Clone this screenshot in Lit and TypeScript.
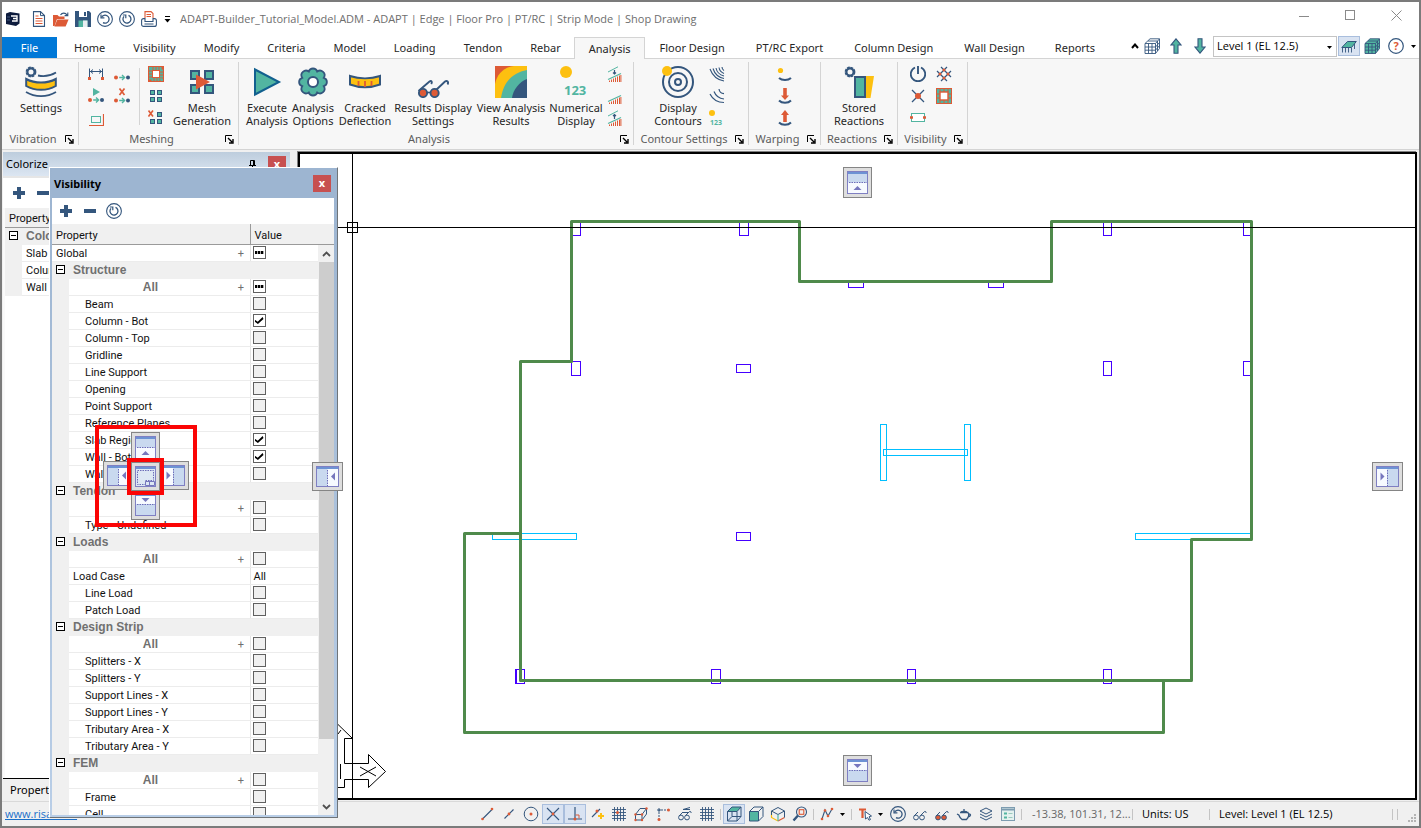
import { LitElement, html, svg, css, nothing, TemplateResult, SVGTemplateResult } from "lit";
import { customElement, property } from "lit/decorators.js";

const N = "#34567d";
const T = "#52b5a1";
const O = "#dd5a36";
const Y = "#fdc010";

const icon = (w: number, h: number, body: SVGTemplateResult) =>
  html`<svg class="ico" width=${w} height=${h} viewBox="0 0 ${w} ${h}" fill="none" aria-hidden="true">${body}</svg>`;

/* ---------- shared pieces ---------- */
const caret = icon(5, 3, svg`<path d="M0 0H5L2.5 3Z" fill="#000"/>`);
const launcher = icon(9, 9, svg`<path d="M.5 7V.5H7" stroke="#000"/><path d="M3 3L7 7M8 4V8H4" stroke="#000" stroke-width="1.4"/>`);
const plus = icon(12, 12, svg`<path d="M6 0V12M0 6H12" stroke=${N} stroke-width="4"/>`);
const minus = icon(12, 12, svg`<path d="M0 6H12" stroke=${N} stroke-width="4"/>`);
const refresh = icon(16, 16, svg`<circle cx="8" cy="8" r="7.4" stroke=${N} stroke-width="1.1"/><path d="M9.5 4.4A4 4 0 1 1 5 5.4" stroke=${N} stroke-width="1.3"/><path d="M3.8 4H6.8V7.2" stroke=${N} stroke-width="1.2"/>`);
const undo = icon(16, 16, svg`<circle cx="8" cy="8" r="7.4" stroke=${N} stroke-width="1.1"/><path d="M4.6 6.2A4 4 0 1 1 6 11.6" stroke=${N} stroke-width="1.3"/><path d="M4 3.6V6.8H7.4" stroke=${N} stroke-width="1.2"/>`);

/* ---------- quick access ---------- */
const logo = icon(14, 14, svg`<path d="M0 1.5L4 0L13.5 1.6V11.6L10 14L0 12Z" fill="#0d1b3d"/><path d="M5 4H11V9H6M7 6.5H11" stroke="#fff" stroke-width="1.4"/><path d="M1 5H4M1 8H4" stroke="#41587f"/>`);
const quick: [string, TemplateResult][] = [
  ["New", icon(16, 16, svg`<path d="M2.5 .6H9.5L13.5 4.6V15.4H2.5Z" fill="#fff" stroke=${N} stroke-width="1.1"/><path d="M9.5 .6V4.6H13.5" stroke=${N}/><path d="M4.5 7.5H11.5M4.5 10H11.5M4.5 12.5H11.5M4.5 5H7.5" stroke=${O}/>`)],
  ["Open", icon(16, 16, svg`<path d="M0 15V4H4.5L6 5.6H11.5V8H4L1.6 15Z" fill=${O}/><path d="M4.4 8.4H15.6L12.6 15.4H1.4Z" fill=${O}/><path d="M7.5 4C9 1.6 12.5 1.4 14 4M14.8 1.4V4.6H11.6" stroke=${N} stroke-width="1.1"/>`)],
  ["Save", icon(16, 16, svg`<path d="M0 0H14L16 2V16H0Z" fill=${N}/><path d="M4 0H12V6H4Z" fill="#fff"/><path d="M9 1H11V5H9Z" fill=${N}/><path d="M3.5 9.5H12.5V16H3.5Z" fill=${T}/><path d="M8 9.5H12.5V16H8Z" fill="#e9eef2"/>`)],
  ["Undo", undo],
  ["Redo", refresh],
  ["Print", icon(16, 16, svg`<path d="M4 7V.6H10L12 2.6V7" fill="#fff" stroke=${O} stroke-width="1.1"/><path d="M5.5 3.5H10M5.5 5.5H10" stroke=${O}/><path d="M4 7.6H2.600A2 2 0 0 0 .6 9.600V13.400A2 2 0 0 0 2.600 15.400H13.400A2 2 0 0 0 15.400 13.400V9.600A2 2 0 0 0 13.400 7.600H12" stroke=${N} stroke-width="1.1"/><path d="M4 7V10.500H12V7M3.500 13H12.500" stroke=${N} stroke-width="1.1"/>`)],
];

/* ---------- ribbon, large ---------- */
const gear = (cx: number, cy: number, r: number, w: number) =>
  svg`<circle cx=${cx} cy=${cy} r=${r} stroke=${N} stroke-width=${w}/><circle cx=${cx} cy=${cy} r=${r + w * 0.5} stroke=${N} stroke-width="1.4" stroke-dasharray="2.800 .9"/>`;

const bigSettings = icon(32, 32, svg`${gear(6, 6, 3.6, 2.2)}
  <path d="M13 9.5C20 11 26 9.5 31 6.5" stroke=${N} stroke-width="1.8"/>
  <path d="M1.2 13C10 17.8 22 17.8 30.8 13V20C22 25 10 25 1.2 20Z" fill=${Y} stroke=${N} stroke-width="2"/>
  <path d="M1 26C10 31.5 22 31.5 31 26" stroke=${N} stroke-width="1.8"/>`);
const bigMesh = icon(32, 32, svg`<g fill=${T} stroke=${N} stroke-width="2"><rect x="5" y="5" width="8" height="8"/><rect x="19" y="5" width="8" height="8"/><rect x="5" y="19" width="8" height="8"/><rect x="19" y="19" width="8" height="8"/></g><path d="M10 8.5L24 16L10 23.5Z" fill=${O}/>`);
const bigPlay = icon(32, 32, svg`<path d="M4 3.5L28 16L4 28.500Z" fill=${T} stroke="#12608f" stroke-width="2"/>`);
const bigGear = icon(32, 32, svg`<path d="M11.800 5.600A4.400 4.400 0 0 1 20.200 5.600A4.600 4.600 0 0 1 26.800 11.800A4.400 4.400 0 0 1 26.800 20.200A4.600 4.600 0 0 1 20.200 26.400A4.400 4.400 0 0 1 11.800 26.400A4.600 4.600 0 0 1 5.200 20.200A4.400 4.400 0 0 1 5.200 11.800A4.600 4.600 0 0 1 11.800 5.600Z" fill=${T} stroke=${N} stroke-width="1.800"/><circle cx="16" cy="16" r="5" fill="#fff" stroke=${N} stroke-width="2"/>`);
const bigCracked = icon(32, 32, svg`<path d="M1 10C10 13 22 13 31 10V18.5C22 22 10 22 1 18.5Z" fill=${Y} stroke=${N} stroke-width="2"/><path d="M9.5 15V20M16 15V21M22.5 15V20" stroke=${O} stroke-width="1.8"/>`);
const bigGlasses = icon(32, 32, svg`<path d="M1.5 25L12.5 15.5C14.5 14 15.5 16 14.2 18M18 25L28 15.5C30 14 32 16 30.5 18.5" stroke=${N} stroke-width="1.9"/><circle cx="6" cy="27" r="4.1" fill=${O} stroke=${N} stroke-width="1.9"/><circle cx="17.6" cy="27" r="4.1" fill=${O} stroke=${N} stroke-width="1.9"/><path d="M10 26.5H13.6" stroke=${N} stroke-width="1.6"/>`);
const bigContour = icon(32, 32, svg`<path d="M0 0H32V32H0Z" fill=${O}/><path d="M0 18C2 8 9 1 19 0H32V32H0Z" fill=${Y}/><path d="M6 32C8 18 16 7 32 4V32Z" fill=${T}/><path d="M17 32C18 24 24 16 32 13V32Z" fill=${N}/>`);
const bigNumeric = icon(32, 32, svg`<circle cx="6" cy="6" r="6" fill=${Y}/><text x="4" y="29" font-family="Noto Sans, sans-serif" font-weight="700" font-size="13" fill=${T}>123</text>`);
const bigTarget = icon(32, 32, svg`<circle cx="16" cy="16" r="15" stroke=${N} stroke-width="2"/><circle cx="16" cy="16" r="9" stroke=${N} stroke-width="2"/><circle cx="16" cy="16" r="3" stroke=${N} stroke-width="2"/><circle cx="5" cy="5" r="5" fill=${Y}/>`);
const bigStored = icon(32, 32, svg`${gear(7, 6, 3.6, 2.2)}<path d="M22 10H31L27.5 32H22Z" fill=${Y}/><rect x="12" y="11" width="10" height="20" fill=${T} stroke=${N} stroke-width="2"/>`);

/* ---------- ribbon, small ---------- */
const dots = (y: number) => svg`<circle cx="2" cy=${y} r="2" fill=${O}/><path d="M5.2 ${y}H10M8 ${y - 2.4}L10.6 ${y}L8 ${y + 2.4}" stroke=${T} stroke-width="1.4"/><circle cx="14" cy=${y} r="2" fill=${N}/>`;
const quad = (s: number, o: number, skip: boolean) => svg`<g fill=${T} stroke=${N}>${skip ? nothing : svg`<rect x=${o + 0.5} y="2.500" width=${s} height=${s}/>`}<rect x=${o + 7.5} y="2.500" width=${s} height=${s}/><rect x=${o + 0.5} y="9.500" width=${s} height=${s}/><rect x=${o + 7.5} y="9.500" width=${s} height=${s}/></g>`;
const frame = (ring: string, tick: string, dash: string) => svg`<rect width="16" height="16" fill=${ring}/><rect x="2.500" y="2.500" width="11" height="11" stroke=${tick} stroke-width="3" stroke-dasharray=${dash}/><rect x="4.500" y="4.500" width="7" height="7" fill="#fff" stroke=${O}/>`;
const slope = (extra: SVGTemplateResult) => svg`${extra}<path d="M1 13.500L14 7.500" stroke=${T} stroke-width="1.2"/><path d="M2.5 16V14.500M4.500 16V13.500M6.500 16V12.500M8.500 16V11.500M10.500 16V10.500M12.500 16V9.500M13.900 16V9" stroke=${O}/>`;
const small: Record<string, TemplateResult> = {
  span: icon(16, 16, svg`<path d="M1.5 13V2.5M14.5 13V2.5M2 5.5H14M5 3.5L2.5 5.5L5 7.5M11 3.5L13.5 5.5L11 7.5" stroke=${N}/><path d="M0 11H3V14H0ZM13 11H16V14H13Z" fill=${O}/>`),
  link: icon(16, 16, dots(11.5)),
  play: icon(16, 16, svg`<path d="M5 0L12 4L5 8Z" fill=${T}/>${dots(12)}`),
  cut: icon(16, 16, svg`<path d="M5.5 .5L10.5 7M10.5 .5L5.5 7" stroke=${O} stroke-width="1.7"/>${dots(12.5)}`),
  offset: icon(16, 16, svg`<rect x="3.5" y="6.500" width="9" height="6" stroke=${T}/><path d="M1 15.500H15.5V4" stroke=${O} stroke-width="1.2"/>`),
  frame: icon(16, 16, frame(O, T, "2 1")),
  frameAlt: icon(16, 16, svg`<rect x=".5" y=".5" width="15" height="15" fill=${T} stroke=${O}/><path d="M4 1V4M8 1V4M12 1V4M4 12V15M8 12V15M12 12V15M1 6H4M1 10H4M12 6H15M12 10H15" stroke=${O}/><rect x="4" y="4" width="8" height="8" fill="#fff" stroke=${O} stroke-width="1.400"/>`),
  quad: icon(16, 16, quad(4, 2, false)),
  quadcut: icon(16, 16, svg`<path d="M.5 .5L5 6.5M5 .5L.5 6.5" stroke=${O} stroke-width="1.6"/>${quad(4, 2, true)}`),
  slope1: icon(16, 16, slope(svg`<path d="M1 6L11 .8" stroke=${T}/><path d="M7.500 4V8M6 6.500L7.500 8L9 6.500" stroke=${N} stroke-width="1.2"/>`)),
  slope2: icon(16, 16, slope(svg``)),
  slope3: icon(16, 16, slope(svg`<path d="M1 6L11 .8" stroke=${T}/><path d="M7.500 4.500V9M6 6L7.500 4.500L9 6" stroke=${N} stroke-width="1.2"/>`)),
  arcs: icon(16, 16, svg`<path d="M1 3C4 11 9 14 15 15M4 2.5C6 9 10 11.5 15 12.5M7 2C8 7 11 9 15 10M10 1.5C10.5 5 12.5 6.5 15 7.5M13 1C13 3 14 4 15 4.6" stroke=${N} stroke-width="1.1"/>`),
  arcs2: icon(16, 16, svg`<path d="M1 6C4 12 9 14.500 15 14.500M5 3.500C7 8.500 10 10.500 15 11M10 1C10.500 4.500 12.500 5.500 15 5.600" stroke=${N} stroke-width="1.2"/>`),
  num: icon(16, 16, svg`<circle cx="3" cy="3" r="3" fill=${Y}/><text x="1" y="15" font-family="Noto Sans, sans-serif" font-weight="700" font-size="7" fill=${T}>123</text>`),
  warp: icon(16, 16, svg`<circle cx="3.500" cy="4.500" r="2.600" fill=${Y}/><path d="M2 12C5 14.800 11 14.800 14 12" stroke=${N} stroke-width="2"/>`),
  warpdown: icon(16, 16, svg`<path d="M8 0V8" stroke=${O} stroke-width="3.600"/><path d="M4 7.500H12L8 12Z" fill=${O}/><path d="M2 12.500C5 15.600 11 15.600 14 12.500" stroke=${N} stroke-width="2"/>`),
  warpup: icon(16, 16, svg`<path d="M8 4V12" stroke=${O} stroke-width="3.600"/><path d="M4 5H12L8 0Z" fill=${O}/><path d="M2 12.500C5 15.500 11 15.500 14 12.500" stroke=${N} stroke-width="2"/>`),
  power: icon(16, 16, svg`<path d="M5 1.500A7.200 7.200 0 1 0 11 1.500" stroke=${N} stroke-width="1.900"/><path d="M8 0V8" stroke=${N} stroke-width="1.900"/>`),
  net: icon(16, 16, svg`<path d="M1 5L11 15M5 1L15 11M1 11L11 1M5 15L15 5" stroke=${N} stroke-width="1.200"/><circle cx="8" cy="4" r="1.500" fill=${O}/><circle cx="8" cy="12" r="1.500" fill=${O}/><circle cx="4" cy="8" r="1.500" fill=${O}/><circle cx="12" cy="8" r="1.500" fill=${O}/>`),
  node: icon(16, 16, svg`<path d="M2 2L14 14M14 2L2 14" stroke=${N} stroke-width="1.300"/><circle cx="8" cy="8" r="3" fill=${O}/>`),
  support: icon(16, 16, svg`<rect x="1.500" y="3.500" width="13" height="8" fill="#fff" stroke=${T}/><path d="M0 7.500H3M13 7.500H16" stroke=${O} stroke-width="2.600"/>`),
};

/* ---------- building views ---------- */
const cube = (front: string) => svg`<path d="M1 5.500L6 .8H15.500V10.500L11.500 15.500H1Z" fill=${front}/><path d="M1 5.500L6 .8H15.500V10.500L11.500 15.500H1ZM1 5.500H11.500L15.500 .8M11.500 5.500V15.500M1 9H11.500L15.500 4.500M1 12.200H11.500L15.500 7.500M4.500 5.500V15.500M8 5.500V15.500M13.500 3V13M4 3H13.500" stroke=${N} stroke-width=".9"/>`;
const building = icon(16, 16, cube("#fff"));
const buildingFull = icon(16, 16, cube(T));
const upArrow = icon(12, 16, svg`<path d="M6 .8L11 7H8V15.300H4V7H1Z" fill=${T} stroke=${N} stroke-width="1.100"/>`);
const downArrow = icon(12, 16, svg`<path d="M6 15.200L1 9H4V.7H8V9H11Z" fill=${T} stroke=${N} stroke-width="1.100"/>`);
const slabView = icon(16, 16, svg`<path d="M.8 9.500L6.500 3.500H15.300L10.500 9.500Z" fill=${T} stroke=${N}/><path d="M1.500 10V14.500M4.500 10V14.500M7.500 10V14.500M10.500 10V14.500M13.500 6V11" stroke=${N} stroke-width=".9"/>`);
const help = icon(16, 16, svg`<circle cx="8" cy="8" r="7.300" stroke=${N} stroke-width="1.200"/><text x="8" y="12" text-anchor="middle" font-family="Noto Sans, sans-serif" font-weight="700" font-size="11" fill=${O}>?</text>`);

/* ---------- status bar ---------- */
const grid = svg`<path d="M3.500 1V15M6.500 1V15M9.500 1V15M12.500 1V15M1 3.500H15M1 6.500H15M1 9.500H15M1 12.500H15" stroke=${N} stroke-width=".9"/>`;
const glasses = (f: string) => svg`<circle cx="4" cy="11.500" r="2.400" fill=${f} stroke=${N}/><circle cx="10" cy="11.500" r="2.400" fill=${f} stroke=${N}/><path d="M2 10L6 6M8.500 9.500L12 6C13 4.800 14.500 5.500 14 7" stroke=${N}/>`;
type Item = { t: "b"; name: string; on?: boolean; ico: TemplateResult } | { t: "s" } | { t: "c" };
const statusItems: Item[] = [
  { t: "b", name: "Snap to end", ico: icon(16, 16, svg`<path d="M3.500 13L13 3.500" stroke=${N} stroke-width="1.100"/><circle cx="13" cy="3" r="1.300" fill=${O}/><circle cx="3.500" cy="13" r="1.300" fill=${O}/>`) },
  { t: "b", name: "Snap to middle", ico: icon(16, 16, svg`<path d="M3.500 12.500L12.500 3.500" stroke=${N} stroke-width="1.100"/><circle cx="8" cy="8" r="1.400" fill=${O}/>`) },
  { t: "b", name: "Snap to centre", ico: icon(16, 16, svg`<circle cx="8" cy="8" r="6.800" stroke=${N}/><circle cx="8" cy="8" r="1.500" fill=${O}/>`) },
  { t: "b", name: "Snap to intersection", on: true, ico: icon(16, 16, svg`<path d="M2 2L14 14M14 2L2 14" stroke=${N} stroke-width="1.100"/><circle cx="8" cy="8" r="1.400" fill=${O}/>`) },
  { t: "b", name: "Snap perpendicular", on: true, ico: icon(16, 16, svg`<path d="M8 1V13M1 13H15" stroke=${N} stroke-width="1.200"/><path d="M8.500 9H12V12.500" stroke=${O}/><circle cx="8" cy="13" r="1.500" fill=${O}/>`) },
  { t: "b", name: "Snap to nearest", ico: icon(16, 16, svg`<path d="M3 11L11 3" stroke=${N} stroke-width="1.100"/><circle cx="8" cy="5" r="1.500" fill=${O}/><path d="M12 7V13M9 10H15" stroke=${Y} stroke-width="2"/>`) },
  { t: "b", name: "Snap to grid", ico: icon(16, 16, svg`${grid}<circle cx="6.500" cy="6.500" r="1.500" fill=${O}/>`) },
  { t: "b", name: "Snap to component", ico: icon(16, 16, svg`<path d="M2.500 8.500L7 2.500H13.500L9 8.500M9 14L13.500 8V2.500" stroke=${N}/><path d="M2.500 8.500H9V14H2.500Z" stroke=${N}/><g fill=${O}><circle cx="2.500" cy="8.500" r="1.200"/><circle cx="9" cy="8.500" r="1.200"/><circle cx="9" cy="14" r="1.200"/><circle cx="2.500" cy="14" r="1.200"/><circle cx="13.500" cy="2.500" r="1.200"/></g>`) },
  { t: "b", name: "Orthogonal", ico: icon(16, 16, svg`<path d="M4 14V4H14" stroke=${N} stroke-dasharray="2 1"/><circle cx="4" cy="13.500" r="1.500" fill=${O}/><circle cx="13.500" cy="4" r="1.500" fill=${O}/><path d="M2 4H6M4 2V6" stroke=${N}/>`) },
  { t: "b", name: "Show snap", ico: icon(16, 16, svg`<g>${glasses("none")}</g><path d="M5 6.500H12M6 3.500H13M13 1.500L6 3.500" stroke=${N}/>`) },
  { t: "b", name: "Show grid", ico: icon(16, 16, grid) },
  { t: "s" },
  { t: "b", name: "Top view", on: true, ico: icon(16, 16, svg`<path d="M1.500 5.500L6 1H15L11 5.500Z" fill=${T} stroke=${N}/><path d="M1.500 5.500H11V15H1.500ZM11 15L15 10.500V1M1.500 15L6 10.500H15M6 10.500V5" stroke=${N}/>`) },
  { t: "b", name: "Front view", ico: icon(16, 16, svg`<path d="M1.500 5.500L6 1H15V10.500L10.500 15M10.500 5.500L15 1" stroke=${N}/><path d="M1.500 5.500H10.500V15H1.500Z" fill=${T} stroke=${N}/>`) },
  { t: "b", name: "Isometric view", ico: icon(16, 16, svg`<path d="M8 1.500L14.500 5L8 8.500L1.500 5Z" stroke=${N}/><path d="M1.500 5V11.500L8 15" stroke=${Y} stroke-width="1.200"/><path d="M8 15L14.500 11.500" stroke=${O} stroke-width="1.200"/><path d="M14.500 11.500V5M1.500 5V9" stroke=${N}/><path d="M8 8.500V15" stroke=${T} stroke-width="1.200"/>`) },
  { t: "b", name: "Zoom window", ico: icon(16, 16, svg`<circle cx="9.500" cy="6" r="5" stroke=${N} stroke-width="1.100"/><rect x="7.200" y="3.700" width="4.600" height="4.600" stroke=${O} stroke-width="1.100"/><path d="M6 9.500L1.500 14.500" stroke=${N} stroke-width="2.400"/>`) },
  { t: "s" },
  { t: "b", name: "Polyline", ico: icon(16, 16, svg`<path d="M3 13L6 4L9 10L13 3" stroke=${N} stroke-width="1.100"/><g fill=${O}><circle cx="3" cy="13" r="1.300"/><circle cx="6" cy="4.500" r="1.300"/><circle cx="9" cy="10" r="1.300"/><circle cx="13" cy="3" r="1.300"/></g>`) },
  { t: "c" },
  { t: "s" },
  { t: "b", name: "Select by type", ico: icon(16, 16, svg`<path d="M2 3.500H9M5.500 3V12" stroke=${O} stroke-width="2.200"/><path d="M8 5.500L14.500 10L12 10.800L13.500 13.500L12 14.200L10.500 11.500L8.500 13Z" fill="#fff" stroke=${N}/>`) },
  { t: "c" },
  { t: "b", name: "Regenerate", ico: undo },
  { t: "b", name: "View settings", ico: icon(16, 16, glasses("none")) },
  { t: "b", name: "Result view", ico: icon(16, 16, glasses(O)) },
  { t: "b", name: "Render", ico: icon(16, 16, svg`<path d="M4 6.500H12C13.500 9 12 12 10.500 13.500H6C4.500 12.500 3.500 11 2.800 9L1 8M12.500 8C15.500 7.500 15 10.500 12 11M4.500 6.500C5.500 5 10.500 5 11.500 6.500M8 4.800V3" stroke=${N} stroke-width="1.300"/>`) },
  { t: "b", name: "Layers", ico: icon(16, 16, svg`<path d="M8 2L14 5L8 8L2 5ZM2 8L8 11L14 8M2 11L8 14L14 11" stroke=${N}/>`) },
  { t: "b", name: "Properties", ico: icon(16, 16, svg`<rect x="1.500" y="1.500" width="13" height="13" fill="#e4f2ef" stroke="#7d9cb0"/><path d="M2 3.500H14" stroke="#7d9cb0" stroke-width="2"/><path d="M4 7.500H7M4 11.500H7" stroke=${T} stroke-width="2"/><path d="M8.500 7.500H12.500M8.500 11.500H12.500" stroke="#9bc9be"/>`) },
  { t: "s" },
];

/* ---------- docking targets ---------- */
type Dir = "up" | "down" | "left" | "right" | "fill";
const dockGlyph = (dir: Dir) => {
  const tall = dir === "up" || dir === "down";
  const w = tall ? 29 : dir === "fill" ? 29 : 31;
  const h = tall ? 31 : 29;
  const x = 4.5, y = 4.5, iw = w - 9, ih = h - 9;
  const mx = w / 2, my = h / 2;
  const parts = {
    up: svg`<rect x=${x} y=${y} width=${iw} height="11" fill="#c9d9ef"/><path d="M6 15.500H24" stroke="#6c6cb8" stroke-dasharray="1.500 1"/><path d="M${mx - 4} 23H${mx + 4}L${mx} 19Z" fill="#7676bd"/>`,
    down: svg`<rect x=${x} y="15" width=${iw} height="11" fill="#c9d9ef"/><path d="M6 15.500H24" stroke="#6c6cb8" stroke-dasharray="1.500 1"/><path d="M${mx - 4} 9H${mx + 4}L${mx} 13Z" fill="#7676bd"/>`,
    left: svg`<rect x=${x} y=${y} width="11" height=${ih} fill="#c9d9ef"/><path d="M15.500 8V24" stroke="#6c6cb8" stroke-dasharray="1.500 1"/><path d="M23 ${my - 4}V${my + 4}L19 ${my}Z" fill="#7676bd"/>`,
    right: svg`<rect x="15" y=${y} width="11" height=${ih} fill="#c9d9ef"/><path d="M15.500 8V24" stroke="#6c6cb8" stroke-dasharray="1.500 1"/><path d="M8.500 ${my - 4}V${my + 4}L12.500 ${my}Z" fill="#7676bd"/>`,
    fill: svg`<rect x=${x} y=${y} width=${iw} height=${ih} fill="#dde7f4"/><path d="M6.500 8.500H22.500V18.500H14.500V22.500H6.500Z" stroke="#6c6cb8" stroke-dasharray="1.500 1"/><path d="M14.500 23.500V19.500H23.500V23.500ZM18.500 19.500V23.500" stroke="#7676bd"/>`,
  };
  return icon(w, h, svg`<rect x=".5" y=".5" width=${w - 1} height=${h - 1} fill="#dedede" stroke="#858585"/>
    <rect x=${x} y=${y} width=${iw} height=${ih} fill="#f7faff"/>${parts[dir]}
    <path d="M5 6H${w - 5}" stroke="#6d92d4" stroke-width="2"/>
    <rect x=${x} y=${y} width=${iw} height=${ih} stroke="#7f7fc2"/>`);
};

/* ---------- ribbon model ---------- */
interface Big { icon: TemplateResult; label: string[]; cls: string }
interface Group { name: string; cls: string; body: TemplateResult }

const big = (b: Big) => html`<button class="big ${b.cls}">${b.icon}<span>${b.label.map((l, i) => html`${i ? html`<br />` : nothing}${l}`)}</span></button>`;
const smalls = (cls: string, names: string[]) =>
  html`<div class="smalls ${cls}">${names.map((n) => (n ? html`<button class="small" aria-label=${n}>${small[n]}</button>` : html`<span></span>`))}</div>`;

const groups: Group[] = [
  { name: "Vibration", cls: "g-vib", body: big({ icon: bigSettings, label: ["Settings"], cls: "grow" }) },
  { name: "Meshing", cls: "g-mesh", body: html`${smalls("two", ["span", "link", "play", "cut", "offset", ""])}<i class="rule"></i>${smalls("one", ["frame", "quad", "quadcut"])}${big({ icon: bigMesh, label: ["Mesh", "Generation"], cls: "w66" })}` },
  {
    name: "Analysis", cls: "g-ana", body: html`${[
      { icon: bigPlay, label: ["Execute", "Analysis"], cls: "w46" },
      { icon: bigGear, label: ["Analysis", "Options"], cls: "w46" },
      { icon: bigCracked, label: ["Cracked", "Deflection"], cls: "w58" },
      { icon: bigGlasses, label: ["Results Display", "Settings"], cls: "w78" },
      { icon: bigContour, label: ["View Analysis", "Results"], cls: "w78" },
      { icon: bigNumeric, label: ["Numerical", "Display"], cls: "w52" },
    ].map(big)}${smalls("one", ["slope1", "slope2", "slope3"])}`,
  },
  { name: "Contour Settings", cls: "g-con", body: html`${big({ icon: bigTarget, label: ["Display", "Contours"], cls: "w58" })}${smalls("slim", ["arcs", "arcs2", "num"])}` },
  { name: "Warping", cls: "g-warp", body: smalls("one", ["warp", "warpdown", "warpup"]) },
  { name: "Reactions", cls: "g-reac", body: big({ icon: bigStored, label: ["Stored", "Reactions"], cls: "grow" }) },
  { name: "Visibility", cls: "g-vis", body: smalls("two", ["power", "net", "node", "frameAlt", "support", ""]) },
];

const ribbonTabs = ["Home", "Visibility", "Modify", "Criteria", "Model", "Loading", "Tendon", "Rebar", "Analysis", "Floor Design", "PT/RC Export", "Column Design", "Wall Design", "Reports"];

/* ---------- property grid model ---------- */
type Row =
  | { k: "top"; label: string }
  | { k: "group"; label: string }
  | { k: "all"; mixed?: boolean }
  | { k: "value"; label: string; value: string }
  | { k: "item"; label: string; on?: boolean };
const items = (...l: string[]): Row[] => l.map((label) => ({ k: "item", label }));
const rows: Row[] = [
  { k: "top", label: "Global" },
  { k: "group", label: "Structure" },
  { k: "all", mixed: true },
  ...items("Beam"),
  { k: "item", label: "Column - Bot", on: true },
  ...items("Column - Top", "Gridline", "Line Support", "Opening", "Point Support", "Reference Planes"),
  { k: "item", label: "Slab Region", on: true },
  { k: "item", label: "Wall - Bot", on: true },
  ...items("Wall - Top"),
  { k: "group", label: "Tendon" },
  { k: "all" },
  ...items("Type - Undefined"),
  { k: "group", label: "Loads" },
  { k: "all" },
  { k: "value", label: "Load Case", value: "All" },
  ...items("Line Load", "Patch Load"),
  { k: "group", label: "Design Strip" },
  { k: "all" },
  ...items("Splitters - X", "Splitters - Y", "Support Lines - X", "Support Lines - Y", "Tributary Area - X", "Tributary Area - Y"),
  { k: "group", label: "FEM" },
  { k: "all" },
  ...items("Frame", "Cell"),
];

const fold = html`<button class="fold" aria-label="Collapse"></button>`;

const base = css`
  :host, * { box-sizing: border-box; }
  button { font: inherit; color: inherit; background: none; border: 0; padding: 0; margin: 0; }
  .ico { display: block; flex: none; }
`;

const gridStyles = css`
  table { border-collapse: collapse; width: 100%; table-layout: fixed; font: 11px/15px Roboto, "Liberation Sans", sans-serif; color: #111; }
  tr { height: 17px; }
  th, td { padding: 1px 0 0; height: 17px; text-align: left; vertical-align: top; font-weight: 400; white-space: nowrap; overflow: hidden; border-bottom: 1px solid #ececec; }
  .gutter, .section th, .section td { background: #f0f0f0; border-bottom-color: #f0f0f0; }
  .section th { font: bold 12px/15px "Liberation Sans", Arial, sans-serif; color: #707070; padding-left: 4px; }
  .section td { padding-top: 3px; }
  .fold { display: block; width: 9px; height: 9px; margin: 0 auto; border: 1px solid #000; background: linear-gradient(#000, #000) center / 5px 1px no-repeat #fff; }
`;

@customElement("plan-view")
export class PlanView extends LitElement {
  static styles = [base, css`
    :host { display: block; position: relative; border: 2px solid #000; box-shadow: -1px -1px 0 #808080; background: #fff; min-width: 0; }
    .plan { display: block; width: 100%; height: 100%; }
    .guide { position: absolute; z-index: 3; }
    .up { top: 13px; left: 50%; margin-left: -15px; }
    .down { bottom: 12px; left: 50%; margin-left: -15px; }
    .left { left: 12px; top: 50%; margin-top: -14px; }
    .right { right: 12px; top: 50%; margin-top: -14px; }
  `];
  render() {
    const columns = [
      [571, 222, 9, 13], [739, 222, 9, 13], [1103, 222, 8, 13], [1243, 222, 8, 13],
      [848, 282, 15, 5], [988, 282, 15, 5],
      [571, 361, 9, 14], [736, 364, 14, 8], [1103, 361, 8, 14], [1243, 361, 8, 14],
      [736, 532, 14, 8],
      [515, 669, 9, 14], [516, 669, 8, 14], [711, 669, 9, 14], [907, 669, 8, 14], [1103, 669, 8, 14],
    ];
    const walls = [[880, 424, 6, 56], [964, 424, 6, 56], [883, 449, 84, 6], [492, 533, 84, 6], [1135, 533, 116, 6]];
    const box = (r: number[], c: string) => svg`<rect x=${r[0] + 0.5} y=${r[1] + 0.5} width=${r[2]} height=${r[3]} stroke=${c}/>`;
    return html`
      <svg class="plan" viewBox="300 154 1115 644" preserveAspectRatio="xMinYMin meet" fill="none" role="img" aria-label="Floor plan, Level 1">
        ${walls.map((w) => box(w, "#00bfff"))}
        ${columns.map((c) => box(c, "#4400ff"))}
        <g stroke="#4f8a4b" stroke-width="3" stroke-linejoin="round" stroke-linecap="round">
          <path d="M571.5 221.5H799.500V281.500H1051.500V221.500H1251.500V539.500H1191.500V680.500H520.500V361.500H571.500Z"/>
          <path d="M520.500 533.500H464.500V732.500H1163.500V680.500"/>
        </g>
        <g stroke="#000">
          <path d="M300 227.500H1415M352.500 154V798"/><rect x="347.500" y="222.500" width="10" height="10"/>
          <path d="M336.500 723L352.500 738.500H344.500V763.500H368.500V754.500L385.500 771.500L368.500 787.500V779.500H344.500V787.500H330"/>
          <path d="M360 767L376 776M360 776L376 767M338 734L341 730M340.500 764V779"/>
        </g>
      </svg>
      <button class="guide up" aria-label="Dock top">${dockGlyph("up")}</button>
      <button class="guide down" aria-label="Dock bottom">${dockGlyph("down")}</button>
      <button class="guide left" aria-label="Dock left">${dockGlyph("left")}</button>
      <button class="guide right" aria-label="Dock right">${dockGlyph("right")}</button>`;
  }
}

@customElement("visibility-window")
export class VisibilityWindow extends LitElement {
  static styles = [base, gridStyles, css`
    :host { display: flex; flex-direction: column; border: 1px solid #fff; border-right-color: #6f7478; border-bottom-color: #6f7478; background: linear-gradient(#9cb4d0, #b9cee7); padding: 0 3px 2px 2px; }
    header { display: flex; align-items: center; height: 30px; flex: none; background: #9db5d1; padding: 0 3px 0 2px; }
    h2 { flex: 1; margin: 0; padding-top: 2px; font: bold 11px/16px "Noto Sans", sans-serif; color: #000; }
    .close { width: 18px; height: 17px; background: #c75050; color: #fff; font: bold 11px/14px "Noto Sans", sans-serif; }
    .tools { display: flex; align-items: center; gap: 12px; height: 26px; flex: none; padding-left: 8px; background: #fff; }
    .tools button { display: block; }
    .tools button:last-child { margin-left: -2px; }
    .head th { height: 20px; background: #f0f0f0; border-bottom: 1px solid #9a9a9a; padding: 4px 0 0 4px; }
    .head th + th { border-left: 1px solid #9a9a9a; }
    .headwrap { flex: none; }
    .headwrap .pc { width: 198px; }
    .scroll { display: flex; flex: 1; min-height: 0; background: #fff; }
    .rows { flex: 1; min-width: 0; overflow: hidden; }
    .rows .gc { width: 17px; }
    .rows .pc { width: 163px; }
    .rows .ac { width: 18px; }
    .rows th.top { padding-left: 4px; }
    .rows th.item { padding-left: 16px; }
    .rows th.val { padding-left: 4px; }
    .rows th.all { text-align: center; font: bold 12px/15px "Liberation Sans", Arial, sans-serif; color: #707070; }
    .add { text-align: center; color: #707070; }
    .rows td.value { border-left: 1px solid #e4e4e4; padding-left: 2px; }
    .value span { padding-left: 1px; }
    .tick, .more { display: block; width: 13px; height: 13px; margin: 0; border: 1px solid #606060; background: #f0f0f0; border-radius: 0; }
    .tick { appearance: none; }
    .tick:checked { background: #fff; }
    .tick:checked::before { content: ""; display: block; width: 9px; height: 7px; margin: 2px 1px; background: #000; clip-path: polygon(0 35%, 36% 68%, 90% 0, 100% 28%, 38% 100%, 0 65%); }
    .more { background: #fff; }
    .more i { display: block; width: 9px; height: 3px; margin: 0 auto; background: repeating-linear-gradient(90deg, #000 0 2px, #aaa 2px 3px); }
    .bar { width: 16px; flex: none; display: flex; flex-direction: column; align-items: center; background: #f0f0f0; padding: 6px 0 5px; gap: 5px; }
    .thumb { width: 15px; height: 477px; flex: 0 1 auto; background: #cdcdcd; }
    .spacer { flex: 1; }
  `];

  private row(r: Row, i: number) {
    const id = `row-${i}`;
    const tick = (label: string, on = false) => html`<input class="tick" type="checkbox" id=${id} .checked=${on} aria-label=${label} />`;
    const more = html`<button class="more" aria-label="Choose"><i></i></button>`;
    switch (r.k) {
      case "top":
        return html`<tr><th class="top" scope="row" colspan="2">${r.label}</th><td class="add">+</td><td class="value">${more}</td></tr>`;
      case "group":
        return html`<tr class="section"><td>${fold}</td><th scope="rowgroup" colspan="3">${r.label}</th></tr>`;
      case "all":
        return html`<tr><td class="gutter"></td><th class="all" scope="row">All</th><td class="add">+</td><td class="value">${r.mixed ? more : tick("All")}</td></tr>`;
      case "value":
        return html`<tr><td class="gutter"></td><th class="val" scope="row" colspan="2">${r.label}</th><td class="value"><span>${r.value}</span></td></tr>`;
      default:
        return html`<tr><td class="gutter"></td><th class="item" scope="row" colspan="2"><label for=${id}>${r.label}</label></th><td class="value">${tick(r.label, r.on)}</td></tr>`;
    }
  }

  render() {
    return html`
      <header><h2>Visibility</h2><button class="close" aria-label="Close">x</button></header>
      <div class="tools"><button aria-label="Expand all">${plus}</button><button aria-label="Collapse all">${minus}</button><button aria-label="Refresh">${refresh}</button></div>
      <div class="headwrap"><table><colgroup><col class="pc" /><col /></colgroup><thead><tr class="head"><th scope="col">Property</th><th scope="col">Value</th></tr></thead></table></div>
      <div class="scroll">
        <div class="rows"><table><colgroup><col class="gc" /><col class="pc" /><col class="ac" /><col /></colgroup><tbody>${rows.map((r, i) => this.row(r, i))}</tbody></table></div>
        <div class="bar">
          ${icon(9, 6, svg`<path d="M1 5L4.500 1.500L8 5" stroke="#505050" stroke-width="1.800"/>`)}
          <div class="thumb"></div><div class="spacer"></div>
          ${icon(9, 6, svg`<path d="M1 1L4.500 4.500L8 1" stroke="#505050" stroke-width="1.800"/>`)}
        </div>
      </div>`;
  }
}

@customElement("colorize-panel")
export class ColorizePanel extends LitElement {
  static styles = [base, gridStyles, css`
    :host { display: flex; flex-direction: column; background: #fff; border-left: 1px solid #f0f0f0; }
    header { display: flex; align-items: center; height: 24px; flex: none; padding: 0 4px 0 3px; background: linear-gradient(#bdcddd, #dce6f2); border-right: 6px solid #f0f0f0; }
    h2 { flex: 1; margin: 0; font: 11px/16px "Noto Sans", sans-serif; color: #000; }
    .pin { margin-right: 12px; }
    .close { width: 18px; height: 17px; background: #c75050; color: #fff; font: bold 11px/14px "Noto Sans", sans-serif; }
    .tools { display: flex; align-items: center; gap: 12px; height: 32px; flex: none; padding-left: 10px; border-top: 2px solid #e6e6e6; }
    .head th { height: 19px; background: #f0f0f0; border-bottom: 1px solid #9a9a9a; padding: 3px 0 0 4px; }
    .gc { width: 17px; }
    .body { flex: 1; min-height: 0; border-left: 2px solid #fafafa; }
    .body td.name { padding-left: 4px; }
    .foot { flex: none; display: flex; height: 22px; border-top: 1px solid #000; background: #f0f0f0; }
    .foot button { padding: 0 8px 0 7px; font: 11px/16px "Noto Sans", sans-serif; color: #000; }
  `];
  render() {
    return html`
      <header><h2>Colorize</h2>
        <button class="pin" aria-label="Pin">${icon(7, 9, svg`<path d="M1.500 5V.5H5.500V5M0 5.500H7M3.500 6V9M4.500 1V5" stroke="#000"/>`)}</button>
        <button class="close" aria-label="Close">x</button></header>
      <div class="tools"><button aria-label="Expand all">${plus}</button><button aria-label="Collapse all">${minus}</button></div>
      <div class="body"><table><colgroup><col class="gc" /><col /></colgroup>
        <thead><tr class="head"><th scope="col" colspan="2">Property</th></tr></thead>
        <tbody>
          <tr class="section"><td>${fold}</td><th scope="rowgroup">Color</th></tr>
          ${["Slab", "Column", "Wall"].map((l) => html`<tr><td class="gutter"></td><td class="name">${l}</td></tr>`)}
        </tbody></table></div>
      <div class="foot"><button>Properties</button></div>`;
  }
}

@customElement("app-root")
export class AppRoot extends LitElement {
  @property() heading = "ADAPT-Builder_Tutorial_Model.ADM - ADAPT | Edge | Floor Pro | PT/RC | Strip Mode | Shop Drawing";

  static styles = [base, css`
    :host { display: flex; flex-direction: column; position: relative; height: 100vh; overflow: hidden; border: 2px solid #7b7b7b; background: #fff; font: 11px/14px "Noto Sans", "Open Sans", sans-serif; color: #262626; }
    .title { display: flex; align-items: center; height: 34px; flex: none; padding-left: 4px; }
    .qat { display: flex; align-items: center; margin-left: 8px; }
    .qat button { width: 22px; display: flex; justify-content: center; }
    .qat .drop { width: 14px; }
    .title h1 { flex: 1; margin: 0 0 0 6px; font: 11px/14px "Open Sans", "Noto Sans", sans-serif; color: #6e6e6e; white-space: nowrap; }
    .win { display: flex; align-self: flex-start; }
    .win button { width: 46px; height: 26px; display: flex; align-items: center; justify-content: center; }

    .tabs { display: flex; align-items: flex-end; height: 23px; flex: none; border-bottom: 1px solid #d4d4d4; }
    .tabs .tab { height: 21px; padding: 0 13px 0 14px; border: 1px solid transparent; border-bottom: 0; margin-right: -1px; white-space: nowrap; }
    .tabs .wide { padding: 0 15px; }
    .tabs .file { width: 55px; padding: 0; background: #0078d7; color: #fff; margin: 0 2px 0 0; border: 0; }
    .tabs .active { height: 22px; background: #f7f7f7; border-color: #d4d4d4; margin-bottom: -1px; }
    .extras { display: flex; align-items: center; align-self: flex-start; height: 20px; margin-left: auto; }
    .extras button { display: flex; align-items: center; justify-content: center; width: 24px; height: 20px; }
    .extras .tiny { width: 11px; }
    .extras .on { width: 22px; background: #d9e3f2; border: 1px solid #a9bedd; }
    .level { appearance: none; display: block; width: 124px; height: 21px; margin: 0 1px; padding: 0 3px; border: 1px solid #c4c4c4; border-radius: 0; background: #fff; font: 11px/14px "Open Sans", "Noto Sans", sans-serif; color: #000; }
    .pick { position: relative; display: block; }
    .pick .ico { position: absolute; right: 6px; top: 10px; }

    .ribbon { display: flex; height: 91px; flex: none; padding: 3px 0 4px; background: #f7f7f7; border-bottom: 1px solid #d4d4d4; }
    .group { display: flex; flex-direction: column; flex: none; border-right: 1px solid #d4d4d4; }
    .content { display: flex; flex: 1; padding-top: 1px; }
    .g-vib, .g-reac { width: 77px; }
    .g-vib .content { padding-left: 2px; }
    .g-mesh { width: 160px; }
    .g-mesh .content { padding-left: 4px; }
    .g-ana { width: 395px; }
    .g-ana .content { padding-left: 5px; }
    .g-con { width: 115px; }
    .g-con .content { padding-left: 15px; }
    .g-warp { width: 72px; }
    .g-warp .content { justify-content: center; }
    .g-vis { width: 70px; }
    .g-vis .content { padding-left: 7px; }
    .big { display: flex; flex-direction: column; align-items: center; gap: 3px; padding-top: 3px; line-height: 13px; text-align: center; white-space: nowrap; }
    .grow { flex: 1; }
    .w46 { width: 46px; } .w52 { width: 52px; } .w58 { width: 58px; } .w66 { width: 66px; } .w78 { width: 78px; }
    .smalls { display: grid; grid-auto-rows: 22px; align-content: start; }
    .two { grid-template-columns: 26px 26px; }
    .one { grid-template-columns: 26px; }
    .slim { grid-template-columns: 20px; }
    .small { display: flex; align-items: center; justify-content: center; }
    .rule { width: 1px; height: 57px; margin: 5px 3px 0 4px; background: #d4d4d4; }
    .caption { display: flex; align-items: center; height: 12px; color: #5c5c5c; white-space: nowrap; }
    .caption span { flex: 1; text-align: center; }
    .caption button { margin: 0 4px 0 1px; }

    .work { display: flex; flex: 1; min-height: 0; padding: 2px 2px 1px 0; background: #f0f0f0; }
    colorize-panel { width: 294px; flex: none; }
    plan-view { flex: 1; margin-left: 2px; }

    .status { display: flex; align-items: center; height: 25px; flex: none; background: #f0f0f0; border-top: 1px solid #d9d9d9; color: #000; white-space: nowrap; font: 11px/14px "Open Sans", "Noto Sans", sans-serif; }
    .status a { margin-left: 3px; color: #1a6fc9; }
    .snaps { display: flex; align-items: center; flex: none; }
    .lead { width: 474px; flex: none; }
    .snaps button { width: 22px; height: 20px; display: flex; align-items: center; justify-content: center; }
    .snaps .on { background: #d9e3f2; border: 1px solid #a9bedd; }
    .snaps .drop { width: 11px; padding-left: 2px; justify-content: flex-start; }
    .sep { width: 1px; height: 11px; margin: 0 2px; background: #c4c4c4; flex: none; }
    .coords { width: 106px; padding-left: 8px; color: #666; }
    .units { width: 72px; padding-left: 7px; }
    .lvl { padding-left: 7px; flex: 1; }
    .grip { align-self: flex-end; margin: 0 2px 3px 8px; }

    visibility-window { position: absolute; z-index: 2; left: 47px; top: 165px; bottom: 8px; width: 289px; }
    .compass { position: absolute; z-index: 3; left: 93px; top: 423px; width: 102px; height: 102px; border: 4px solid #fb0505; }
    .compass button { position: absolute; }
    .compass .up { left: 32px; top: 3px; }
    .compass .down { left: 32px; top: 60px; }
    .compass .left { left: 4px; top: 32px; }
    .compass .right { left: 59px; top: 32px; }
    .compass .fill { left: 28px; top: 29px; width: 37px; height: 37px; border: 4px solid #fb0505; display: block; }
  `];

  private tabClass(t: string) {
    return `tab${t === "Analysis" ? " active" : ""}${/[ ]/.test(t) ? " wide" : ""}`;
  }

  render() {
    return html`
      <div class="title">
        ${logo}
        <div class="qat">${quick.map(([n, i]) => html`<button aria-label=${n}>${i}</button>`)}<button class="drop" aria-label="Customize">${icon(7, 7, svg`<path d="M1 .5H6" stroke="#000"/><path d="M.5 3H6.500L3.500 6.500Z" fill="#000"/>`)}</button></div>
        <h1>${this.heading}</h1>
        <div class="win">
          <button aria-label="Minimize">${icon(11, 11, svg`<path d="M0 6.500H10" stroke="#8a8a8a"/>`)}</button>
          <button aria-label="Maximize">${icon(11, 11, svg`<rect x=".5" y=".5" width="9" height="9" stroke="#8a8a8a"/>`)}</button>
          <button aria-label="Close">${icon(11, 11, svg`<path d="M.5 .5L10.500 10.500M10.500 .5L.5 10.500" stroke="#8a8a8a"/>`)}</button>
        </div>
      </div>

      <nav class="tabs">
        <button class="tab file">File</button>
        ${ribbonTabs.map((t) => html`<button class=${this.tabClass(t)}>${t}</button>`)}
        <div class="extras">
          <button class="tiny" aria-label="Collapse ribbon">${icon(8, 6, svg`<path d="M1 5L4 1.500L7 5" stroke="#000" stroke-width="2"/>`)}</button>
          <button aria-label="Structure view">${building}</button>
          <button aria-label="Level up">${upArrow}</button>
          <button aria-label="Level down">${downArrow}</button>
          <label class="pick"><select class="level" aria-label="Level"><option>Level 1 (EL 12.5)</option></select>${caret}</label>
          <button class="on" aria-label="Single level">${slabView}</button>
          <button aria-label="Full structure">${buildingFull}</button>
          <button aria-label="Help">${help}</button>
          <button class="tiny" aria-label="More">${caret}</button>
        </div>
      </nav>

      <div class="ribbon">
        ${groups.map((g) => html`<section class="group ${g.cls}">
          <div class="content">${g.body}</div>
          <div class="caption"><span>${g.name}</span><button aria-label="${g.name} options">${launcher}</button></div>
        </section>`)}
      </div>

      <main class="work"><colorize-panel></colorize-panel><plan-view></plan-view></main>

      <footer class="status">
        <div class="lead"><a href="#">www.risa.com</a></div>
        <div class="snaps">${statusItems.map((s) =>
          s.t === "b" ? html`<button class=${s.on ? "on" : ""} aria-label=${s.name}>${s.ico}</button>`
          : s.t === "c" ? html`<button class="drop" aria-label="More">${caret}</button>`
          : html`<i class="sep"></i>`)}</div>
        <span class="coords">-13.38, 101.31, 12...</span><i class="sep"></i>
        <span class="units">Units: US</span><i class="sep"></i>
        <span class="lvl">Level: Level 1 (EL 12.5)</span>
        <i class="sep"></i><i class="sep"></i>
        <span class="grip">${icon(9, 9, svg`<path d="M6 0H8V2H6ZM3 3H5V5H3ZM6 3H8V5H6ZM0 6H2V8H0ZM3 6H5V8H3ZM6 6H8V8H6Z" fill="#b4b4b4"/>`)}</span>
      </footer>

      <visibility-window></visibility-window>
      <div class="compass">
        <button class="up" aria-label="Dock above">${dockGlyph("up")}</button>
        <button class="down" aria-label="Dock below">${dockGlyph("down")}</button>
        <button class="left" aria-label="Dock to the left">${dockGlyph("left")}</button>
        <button class="right" aria-label="Dock to the right">${dockGlyph("right")}</button>
        <button class="fill" aria-label="Dock as tab">${dockGlyph("fill")}</button>
      </div>`;
  }
}
